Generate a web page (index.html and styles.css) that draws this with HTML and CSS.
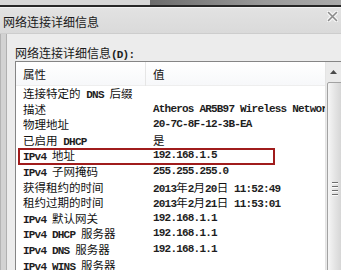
FILE: index.html
```html
<!DOCTYPE html>
<html lang="zh-CN">
<head>
<meta charset="utf-8">
<title>网络连接详细信息</title>
<link rel="stylesheet" href="styles.css">
</head>
<body>
<div class="topband"><div class="tb-left"></div><div class="tb-right"></div></div>
<div class="window">
  <div class="titlebar">
    <span class="title">网络连接详细信息</span>
    <svg class="close" width="11" height="11" viewBox="0 0 11 11">
      <path d="M1.5 1.5 L9.5 9.5 M9.5 1.5 L1.5 9.5" stroke="#f4f4f4" stroke-width="4" stroke-linecap="round"/>
      <path d="M1.5 1.5 L9.5 9.5 M9.5 1.5 L1.5 9.5" stroke="#8c8c8c" stroke-width="1.6" stroke-linecap="round"/>
    </svg>
  </div>
  <div class="frame">
    <div class="panel">
      <div class="label">网络连接详细信息<span class="en">(D):</span></div>
      <div class="lv">
        <div class="lv-main">
          <div class="hdr"><div class="hc c1">属性</div><div class="hc c2">值</div></div>
          <div class="row"><div class="c1">连接特定的<span class="en"> DNS </span>后缀</div><div class="c2"></div></div>
          <div class="row"><div class="c1">描述</div><div class="c2 en">Atheros AR5B97 Wireless Network Adapter</div></div>
          <div class="row"><div class="c1">物理地址</div><div class="c2 en">20-7C-8F-12-3B-EA</div></div>
          <div class="row"><div class="c1">已启用<span class="en"> DHCP</span></div><div class="c2">是</div></div>
          <div class="row hl"><div class="c1"><span class="en">IPv4 </span>地址</div><div class="c2 en">192.168.1.5</div></div>
          <div class="row"><div class="c1"><span class="en">IPv4 </span>子网掩码</div><div class="c2 en">255.255.255.0</div></div>
          <div class="row"><div class="c1">获得租约的时间</div><div class="c2"><span class="en">2013</span>年<span class="en">2</span>月<span class="en">20</span>日<span class="en"> 11:52:49</span></div></div>
          <div class="row"><div class="c1">租约过期的时间</div><div class="c2"><span class="en">2013</span>年<span class="en">2</span>月<span class="en">21</span>日<span class="en"> 11:53:01</span></div></div>
          <div class="row"><div class="c1"><span class="en">IPv4 </span>默认网关</div><div class="c2 en">192.168.1.1</div></div>
          <div class="row"><div class="c1"><span class="en">IPv4 DHCP </span>服务器</div><div class="c2 en">192.168.1.1</div></div>
          <div class="row"><div class="c1"><span class="en">IPv4 DNS </span>服务器</div><div class="c2 en">192.168.1.1</div></div>
          <div class="row"><div class="c1"><span class="en">IPv4 WINS </span>服务器</div><div class="c2"></div></div>
        </div>
        <div class="sb">
          <div class="sb-up"><svg width="7" height="4" viewBox="0 0 7 4"><path d="M0 4 L3.5 0 L7 4 Z" fill="#4a4a4a"/></svg></div>
          <div class="sb-thumb"><div class="grip"><i></i><i></i><i></i><i></i></div></div>
        </div>
      </div>
    </div>
  </div>
</div>
</body>
</html>
```
FILE: styles.css
```css
html, body {
  margin: 0;
  padding: 0;
}
body {
  width: 341px;
  height: 270px;
  overflow: hidden;
  background: #d8d8d8;
  font-family: "Noto Sans CJK SC", sans-serif;
  color: #111;
}
.topband {
  display: flex;
  height: 5px;
  border-bottom: 2px solid #262626;
}
.tb-left {
  width: 150px;
  background: #d6d6d6;
}
.tb-right {
  flex: 1;
  background: linear-gradient(to right, #6c6c6c, #9a9a9a 60%, #aaaaaa);
}
.window {
  display: flex;
  flex-direction: column;
  border-top: 1px solid #f2f2f2;
}
.titlebar {
  height: 25px;
  display: flex;
  align-items: center;
  justify-content: space-between;
  padding: 0 3px 0 3px;
  background: linear-gradient(#e2e2e2, #dadada);
  border-bottom: 1px solid #cdcdcd;
}
.title {
  font-size: 12px;
  line-height: 14px;
  margin-top: 3px;
  color: #1a1a1a;
}
.close {
  align-self: flex-start;
  margin-top: 3px;
}
.frame {
  padding-left: 5px;
  background: #d2d2d2;
  border-left: 1px solid #b4b4b4;
}
.panel {
  background: #ececec;
  border-left: 1px solid #b0b0b0;
  padding: 11px 0 0 8px;
}
.label {
  font-size: 12px;
  line-height: 15px;
  height: 15px;
  padding-bottom: 1px;
  color: #1a1a1a;
}
.en {
  font-family: "Liberation Mono", monospace;
  font-size: 11px;
  font-weight: bold;
  letter-spacing: -0.8px;
  color: #1e1e1e;
}
.lv {
  display: flex;
  width: 327px;
  border: 1px solid #858585;
  border-right: none;
  background: #ffffff;
}
.lv-main {
  width: 310px;
  overflow: hidden;
  white-space: nowrap;
}
.hdr {
  display: grid;
  grid-template-columns: 130px 1fr;
  height: 24px;
  background: linear-gradient(#ffffff, #f7f8fa);
  border-bottom: 1px solid #eeeeee;
  box-sizing: border-box;
}
.hc {
  font-size: 11.5px;
  line-height: 24px;
  padding-left: 7px;
}
.hc.c1 {
  border-right: 1px solid #e6e6e6;
}
.row {
  display: grid;
  grid-template-columns: 130px 180px;
  height: 15.6px;
  line-height: 15.6px;
  font-size: 11.5px;
  position: relative;
}
.row .c1, .row .c2 {
  padding-left: 7px;
  overflow: hidden;
}
.row .c2.en {
  font-size: 11px;
}
.row.hl::after {
  content: "";
  position: absolute;
  left: 2px;
  top: -0.5px;
  width: 257px;
  height: 17px;
  border: 2.5px solid #a01c1c;
  box-sizing: border-box;
}
.sb {
  width: 17px;
  flex: none;
  background: #eaeaea;
  border-left: 1px solid #e4e4e4;
  display: flex;
  flex-direction: column;
}
.sb-up {
  height: 19px;
  display: flex;
  align-items: center;
  justify-content: center;
  padding-right: 2px;
}
.sb-thumb {
  height: 200px;
  margin: 1px 0 0 1px;
  border: 1px solid #a2a2a2;
  border-radius: 2px;
  background: linear-gradient(to right, #f6f6f6, #e4e4e4 50%, #d4d4d4);
  padding-top: 99px;
}
.grip {
  display: flex;
  flex-direction: column;
  gap: 2px;
  padding-left: 4px;
}
.grip i {
  display: block;
  width: 6px;
  height: 1px;
  background: #6e6e6e;
  border-bottom: 1px solid #fbfbfb;
}
```
